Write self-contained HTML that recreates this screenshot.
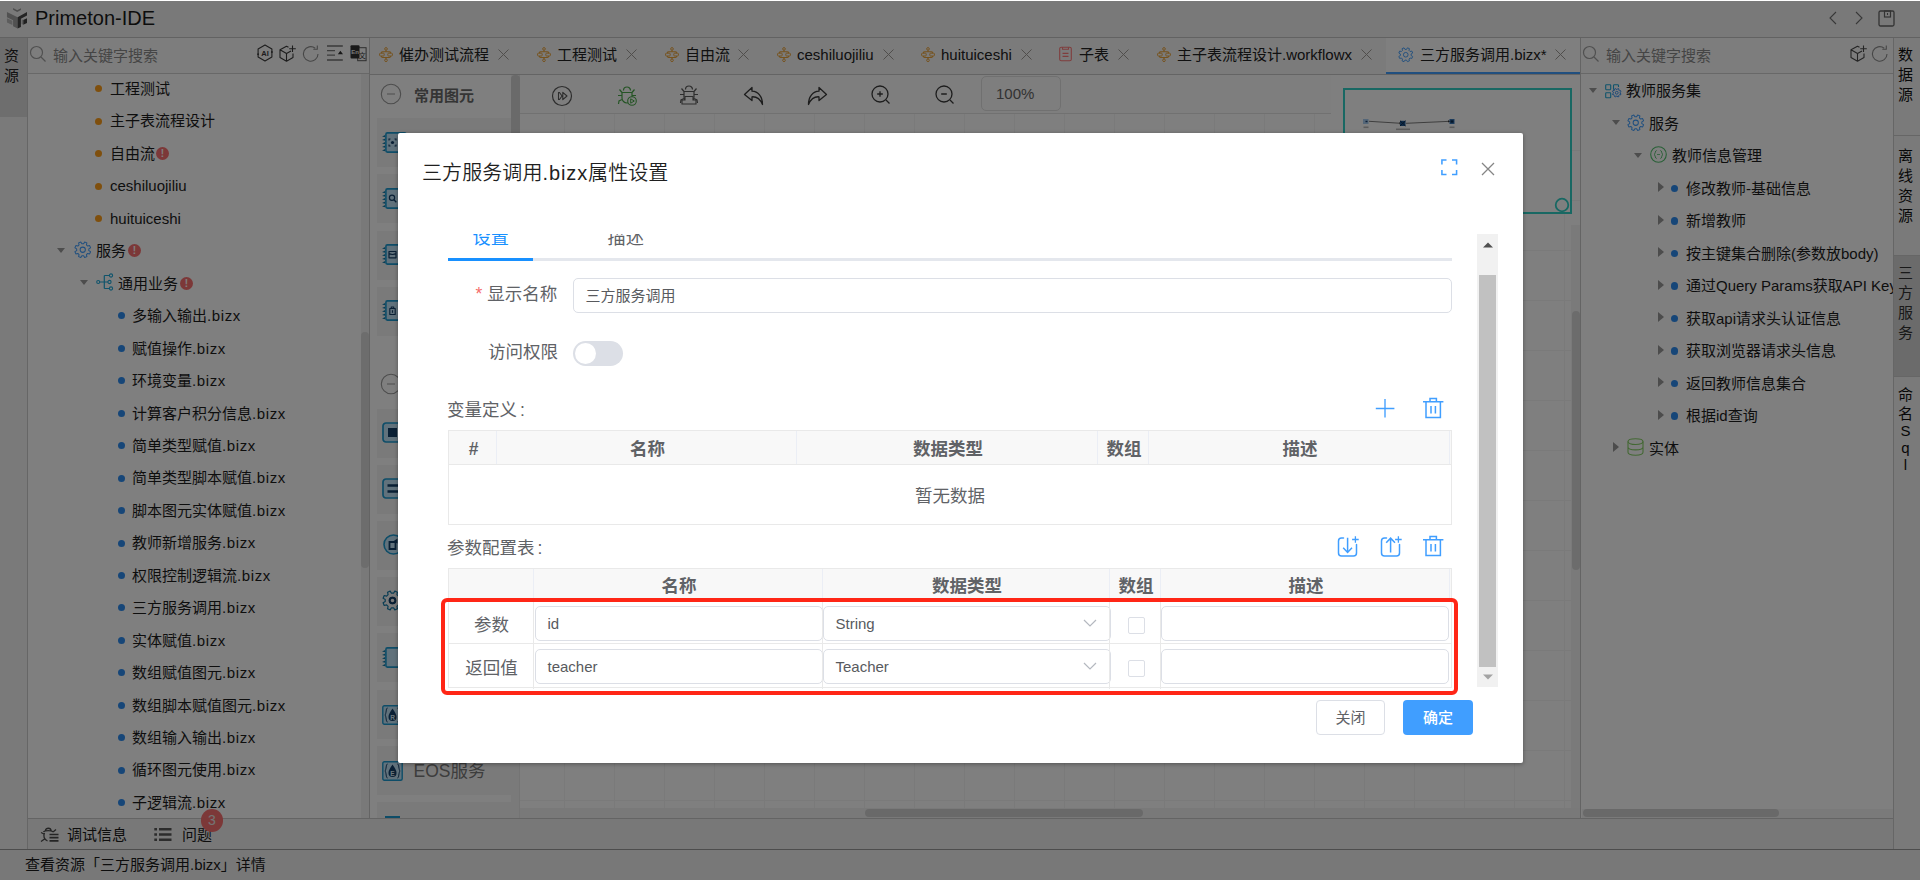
<!DOCTYPE html>
<html lang="zh-CN"><head><meta charset="utf-8"><title>Primeton-IDE</title>
<style>
*{box-sizing:border-box;margin:0;padding:0}
html,body{width:1920px;height:880px;overflow:hidden;background:#fff}
body{font-family:"Liberation Sans","Noto Sans CJK SC",sans-serif;font-size:15px;color:#222;}
#app{position:absolute;left:0;top:0;width:1920px;height:880px;overflow:hidden;background:#fff}
.abs{position:absolute}
.t{position:absolute;white-space:nowrap;line-height:20px;height:20px}
svg{position:absolute;overflow:visible}
.hdr{position:absolute;left:0;top:1px;width:1920px;height:37px;background:#f3f3f3;border-bottom:1px solid #c4c4c4}
.lstrip{position:absolute;left:0;top:38px;width:28px;height:811px;background:#f4f4f4;border-right:1px solid #ccc}
.rstrip{position:absolute;left:1893px;top:38px;width:27px;height:811px;background:#f4f4f4;border-left:1px solid #ccc}
.vt{position:absolute;width:27px;text-align:center;font-size:15px;line-height:17.5px;color:#222}
.lp{position:absolute;left:28px;top:38px;width:342px;height:780px;background:#fff;border-right:1px solid #c8c8c8}
.rp{position:absolute;left:1580px;top:38px;width:313px;height:780px;background:#fff;border-left:1px solid #c8c8c8;overflow:hidden}
.search{position:absolute;left:0;top:0;width:100%;height:36px;border-bottom:1px solid #d0d0d0;background:#fbfbfb}
.ph{color:#8a8a8a;font-size:15px}
.row{position:absolute;left:0;width:100%;height:32.5px;line-height:32.5px;font-size:15px;white-space:nowrap;color:#1c1c1c}
.row span.tx{position:absolute;top:0}
.ls{letter-spacing:.6px}
.dot{position:absolute;width:7px;height:7px;border-radius:50%}
.arr{position:absolute;width:0;height:0}
.arr.d{border-left:4.5px solid transparent;border-right:4.5px solid transparent;border-top:5.5px solid #9a9a9a}
.arr.r{border-top:5px solid transparent;border-bottom:5px solid transparent;border-left:6px solid #989898}
.err{position:absolute;width:13px;height:13px;border-radius:50%;background:#f97070;color:#fff;font-size:10px;line-height:13px;text-align:center;font-weight:bold}
.tabs{position:absolute;left:370px;top:38px;width:1210px;height:37px;background:#f7f7f7;border-bottom:1px solid #c8c8c8}
.tab{position:absolute;top:0;height:35px;line-height:33px;font-size:15px;color:#222;white-space:nowrap}
.mask{position:absolute;left:0;top:1px;width:1920px;height:879px;background:rgba(0,0,0,.5)}
.dlg{position:absolute;left:398px;top:133px;width:1125px;height:630px;background:#fff;border-radius:2px;box-shadow:0 1px 4px rgba(0,0,0,.35)}
.lbl{position:absolute;font-size:17.5px;color:#606266;white-space:nowrap;line-height:24px}
.inp{position:absolute;border:1px solid #dcdfe6;border-radius:5px;background:#fff;font-size:15px;color:#585a5e;line-height:34px;padding-left:11.5px;white-space:nowrap}
.th{position:absolute;top:0;height:100%;border-right:1px solid #ebeef5;font-weight:bold;font-size:17.5px;color:#606266;text-align:center;padding-left:2px}
</style></head>
<body><div id="app">
<div class="hdr"><svg style="left:0;top:-1px" width="34" height="34" viewBox="0 0 34 34"><path d="M13.100 7.900 L17.200 10.300 L20.900 8.300 V10.100 L17.200 12.100 L13.100 9.800Z" fill="#9a9a9a"/><path d="M6.950 12 L17.600 17.200 V28.600 L13.100 26.300 V20.200 L6.950 17.300Z" fill="#a2a2a2"/><path d="M6.950 18.300 L12.400 20.700 V24.900 L6.950 22.500Z" fill="#bababa"/><path d="M17.600 17.200 L27 12 V15.600 L20.900 18.700 V26.900 L17.600 28.600Z" fill="#484848"/><path d="M23.200 19.900 L27 18.200 V22.900 L23.200 24.800Z" fill="#404040"/><path d="M21.600 19.300 L23.200 19.900 V24.800 L21.600 24.100Z" fill="#b0b0b0"/></svg><div class="t" style="left:35px;top:6px;font-size:20px;line-height:22px;height:22px;color:#1a1a1a">Primeton-IDE</div><svg style="left:1827px;top:10px" width="12" height="14" viewBox="0 0 12 14"><path d="M9 1 L3 7 L9 13" fill="none" stroke="#707070" stroke-width="1.1"/></svg><svg style="left:1853px;top:10px" width="12" height="14" viewBox="0 0 12 14"><path d="M3 1 L9 7 L3 13" fill="none" stroke="#707070" stroke-width="1.1"/></svg><svg style="left:1878px;top:9px" width="17" height="17" viewBox="0 0 17 17"><rect x="1" y="1" width="15" height="15" rx="1.5" fill="none" stroke="#666" stroke-width="1.3"/><rect x="6.5" y="1" width="6" height="6" fill="none" stroke="#666" stroke-width="1.2"/><path d="M9.5 3 V5" stroke="#666" stroke-width="1.1"/></svg></div>
<div class="lstrip"><div class="abs" style="left:0;top:0;width:27px;height:79px;background:#dcdcdc"></div><div class="vt" style="left:-2px;top:8px;line-height:20px">资<br>源</div></div>
<div class="rstrip"><div class="abs" style="left:0;top:97px;width:26px;height:1px;background:#ccc"></div><div class="abs" style="left:0;top:217px;width:26px;height:1px;background:#ccc"></div><div class="abs" style="left:0;top:218px;width:26px;height:120px;background:#d6d6d6"></div><div class="abs" style="left:0;top:338px;width:26px;height:1px;background:#ccc"></div><div class="vt" style="left:-2px;top:7px;line-height:20px;height:20px;color:#111">数</div><div class="vt" style="left:-2px;top:27px;line-height:20px;height:20px;color:#111">据</div><div class="vt" style="left:-2px;top:47px;line-height:20px;height:20px;color:#111">源</div><div class="vt" style="left:-2px;top:107.5px;line-height:20px;height:20px;color:#111">离</div><div class="vt" style="left:-2px;top:127.5px;line-height:20px;height:20px;color:#111">线</div><div class="vt" style="left:-2px;top:147.5px;line-height:20px;height:20px;color:#111">资</div><div class="vt" style="left:-2px;top:167.5px;line-height:20px;height:20px;color:#111">源</div><div class="vt" style="left:-2px;top:225px;line-height:20px;height:20px;color:#333">三</div><div class="vt" style="left:-2px;top:245px;line-height:20px;height:20px;color:#333">方</div><div class="vt" style="left:-2px;top:265px;line-height:20px;height:20px;color:#333">服</div><div class="vt" style="left:-2px;top:285px;line-height:20px;height:20px;color:#333">务</div><div class="vt" style="left:-2px;top:347px;line-height:20px;height:20px;color:#111">命</div><div class="vt" style="left:-2px;top:366px;line-height:20px;height:20px;color:#111">名</div><div class="vt" style="left:-2px;top:383px;line-height:20px;height:20px;color:#111">S</div><div class="vt" style="left:-2px;top:400px;line-height:20px;height:20px;color:#111">q</div><div class="vt" style="left:-2px;top:417px;line-height:20px;height:20px;color:#111">l</div></div>
<div class="lp"><div class="search"><svg style="left:1px;top:7px" width="18" height="18" viewBox="0 0 18 18"><circle cx="7.5" cy="7.5" r="6" fill="none" stroke="#a0a0a0" stroke-width="1.2"/><path d="M12 12 L16.5 16.5" stroke="#a0a0a0" stroke-width="1.2"/></svg><div class="t ph" style="left:25px;top:8px">输入关键字搜索</div><svg style="left:227.9px;top:6px" width="18" height="18" viewBox="0 0 18 18"><path d="M9 1 L15.900 5 V13 L9 17 L2.100 13 V5Z" fill="none" stroke="#3a3a3a" stroke-width="1.100" stroke-linejoin="round"/><circle cx="2.100" cy="10.200" r="0.900" fill="#3a3a3a"/><circle cx="15.900" cy="8" r="0.900" fill="#3a3a3a"/><text x="9" y="11.700" font-size="7.500" font-weight="bold" text-anchor="middle" fill="#3a3a3a" font-family="Liberation Sans,sans-serif">AI</text></svg><svg style="left:251px;top:7px" width="18" height="18" viewBox="0 0 18 18"><path d="M9.500 2.300 L7.500 1.300 L1 4.800 V12.600 L7.500 16.300 L14 12.600 V8.500 M1 4.800 L7.500 8.500 L12 6 M7.500 8.500 V16.300" fill="none" stroke="#3a3a3a" stroke-width="1.100" stroke-linejoin="round"/><path d="M13.500 0.500 V7 M10.200 3.700 H16.800" stroke="#3a3a3a" stroke-width="1.100"/></svg><svg style="left:273.9px;top:7px" width="18" height="18" viewBox="0 0 18 18"><path d="M16 9 A7.300 7.300 0 1 1 13.200 3.200" fill="none" stroke="#8c8c8c" stroke-width="1.100"/><path d="M11.300 4.300 H15.300 V0.500" fill="none" stroke="#8c8c8c" stroke-width="1.100"/></svg><svg style="left:298.2px;top:6.5px" width="18" height="16" viewBox="0 0 18 16"><path d="M1 1 H16.800 M1 15 H16.800" stroke="#2e2e2e" stroke-width="1" fill="none"/><path d="M1 5.700 H9 M1 10.100 H9" stroke="#7a7a7a" stroke-width="1.200" fill="none"/><path d="M11.800 9.300 L14.400 5.700 L17 9.300Z" fill="#2e2e2e"/></svg><svg style="left:321.5px;top:7px" width="17" height="17" viewBox="0 0 17 17"><rect x="7.700" y="2.700" width="8.400" height="13" fill="#fbfbfb" stroke="#5a5a5a" stroke-width="1"/><text x="12.300" y="12.600" font-size="7" text-anchor="middle" fill="#3a3a3a" font-family="Liberation Sans,Noto Sans CJK SC,sans-serif">文</text><rect x="0.500" y="0.300" width="9" height="13.200" rx="1" fill="#333"/><text x="5" y="9.300" font-size="6" font-weight="bold" text-anchor="middle" fill="#eee" font-family="Liberation Sans,sans-serif">En</text></svg></div><div class="row" style="top:35.00px"><span class="dot" style="left:67px;top:12.3px;background:#ff9f1a"></span><span class="tx" style="left:82px">工程测试</span></div><div class="row" style="top:67.45px"><span class="dot" style="left:67px;top:12.3px;background:#ff9f1a"></span><span class="tx" style="left:82px">主子表流程设计</span></div><div class="row" style="top:99.90px"><span class="dot" style="left:67px;top:12.3px;background:#ff9f1a"></span><span class="tx" style="left:82px">自由流</span><span class="err" style="left:128px;top:9px">!</span></div><div class="row" style="top:132.35px"><span class="dot" style="left:67px;top:12.3px;background:#ff9f1a"></span><span class="tx" style="left:82px">ceshiluojiliu</span></div><div class="row" style="top:164.80px"><span class="dot" style="left:67px;top:12.3px;background:#ff9f1a"></span><span class="tx" style="left:82px">huituiceshi</span></div><div class="row" style="top:197.25px"><span class="arr d" style="left:28.5px;top:12.5px"></span><svg style="left:46px;top:5.6px" width="17.5" height="17.5" viewBox="0 0 20 20"><path d="M16.93 11.00 L18.93 12.21 L17.88 14.75 L15.60 14.20 L14.20 15.60 L14.75 17.88 L12.21 18.93 L11.00 16.93 L9.00 16.93 L7.79 18.93 L5.25 17.88 L5.80 15.60 L4.40 14.20 L2.12 14.75 L1.07 12.21 L3.07 11.00 L3.07 9.00 L1.07 7.79 L2.12 5.25 L4.40 5.80 L5.80 4.40 L5.25 2.12 L7.79 1.07 L9.00 3.07 L11.00 3.07 L12.21 1.07 L14.75 2.12 L14.20 4.40 L15.60 5.80 L17.88 5.25 L18.93 7.79 L16.93 9.00Z" fill="none" stroke="#409eff" stroke-width="1.15" stroke-linejoin="round"/><circle cx="10" cy="10" r="3" fill="none" stroke="#409eff" stroke-width="1.15"/></svg><span class="tx" style="left:68px">服务</span><span class="err" style="left:100px;top:9px">!</span></div><div class="row" style="top:229.70px"><span class="arr d" style="left:51.5px;top:12.5px"></span><svg style="left:68px;top:5px" width="18" height="18" viewBox="0 0 18 18"><path d="M3.600 9 H12 M8.300 2.500 V15.500 M8.300 2.500 Q8.300 2.500 9 2.500 H13.500 M8.300 15.500 H13.500" fill="none" stroke="#1fa8d8" stroke-width="1.2"/><circle cx="2.200" cy="9" r="1.500" fill="none" stroke="#1fa8d8" stroke-width="1.1"/><circle cx="15" cy="2.500" r="1.600" fill="none" stroke="#1fa8d8" stroke-width="1.1"/><circle cx="13.500" cy="9" r="1.600" fill="none" stroke="#1fa8d8" stroke-width="1.1"/><circle cx="15" cy="15.500" r="1.600" fill="none" stroke="#1fa8d8" stroke-width="1.1"/></svg><span class="tx" style="left:90px">通用业务</span><span class="err" style="left:152px;top:9px">!</span></div><div class="row" style="top:262.15px"><span class="dot" style="left:90px;top:12.3px;background:#2d8cf0"></span><span class="tx" style="left:104px">多输入输出<span class="ls">.bizx</span></span></div><div class="row" style="top:294.60px"><span class="dot" style="left:90px;top:12.3px;background:#2d8cf0"></span><span class="tx" style="left:104px">赋值操作<span class="ls">.bizx</span></span></div><div class="row" style="top:327.05px"><span class="dot" style="left:90px;top:12.3px;background:#2d8cf0"></span><span class="tx" style="left:104px">环境变量<span class="ls">.bizx</span></span></div><div class="row" style="top:359.50px"><span class="dot" style="left:90px;top:12.3px;background:#2d8cf0"></span><span class="tx" style="left:104px">计算客户积分信息<span class="ls">.bizx</span></span></div><div class="row" style="top:391.95px"><span class="dot" style="left:90px;top:12.3px;background:#2d8cf0"></span><span class="tx" style="left:104px">简单类型赋值<span class="ls">.bizx</span></span></div><div class="row" style="top:424.40px"><span class="dot" style="left:90px;top:12.3px;background:#2d8cf0"></span><span class="tx" style="left:104px">简单类型脚本赋值<span class="ls">.bizx</span></span></div><div class="row" style="top:456.85px"><span class="dot" style="left:90px;top:12.3px;background:#2d8cf0"></span><span class="tx" style="left:104px">脚本图元实体赋值<span class="ls">.bizx</span></span></div><div class="row" style="top:489.30px"><span class="dot" style="left:90px;top:12.3px;background:#2d8cf0"></span><span class="tx" style="left:104px">教师新增服务<span class="ls">.bizx</span></span></div><div class="row" style="top:521.75px"><span class="dot" style="left:90px;top:12.3px;background:#2d8cf0"></span><span class="tx" style="left:104px">权限控制逻辑流<span class="ls">.bizx</span></span></div><div class="row" style="top:554.20px"><span class="dot" style="left:90px;top:12.3px;background:#2d8cf0"></span><span class="tx" style="left:104px">三方服务调用<span class="ls">.bizx</span></span></div><div class="row" style="top:586.65px"><span class="dot" style="left:90px;top:12.3px;background:#2d8cf0"></span><span class="tx" style="left:104px">实体赋值<span class="ls">.bizx</span></span></div><div class="row" style="top:619.10px"><span class="dot" style="left:90px;top:12.3px;background:#2d8cf0"></span><span class="tx" style="left:104px">数组赋值图元<span class="ls">.bizx</span></span></div><div class="row" style="top:651.55px"><span class="dot" style="left:90px;top:12.3px;background:#2d8cf0"></span><span class="tx" style="left:104px">数组脚本赋值图元<span class="ls">.bizx</span></span></div><div class="row" style="top:684.00px"><span class="dot" style="left:90px;top:12.3px;background:#2d8cf0"></span><span class="tx" style="left:104px">数组输入输出<span class="ls">.bizx</span></span></div><div class="row" style="top:716.45px"><span class="dot" style="left:90px;top:12.3px;background:#2d8cf0"></span><span class="tx" style="left:104px">循环图元使用<span class="ls">.bizx</span></span></div><div class="row" style="top:748.90px"><span class="dot" style="left:90px;top:12.3px;background:#2d8cf0"></span><span class="tx" style="left:104px">子逻辑流<span class="ls">.bizx</span></span></div><div class="abs" style="left:333px;top:36px;width:8px;height:744px;background:#f2f2f2"></div><div class="abs" style="left:333px;top:293.5px;width:7.5px;height:236px;background:#dadada;border-radius:4px"></div></div>
<div class="abs" style="left:28px;top:818px;width:1865px;height:31px;background:#f1f1f1;border-top:1px solid #c8c8c8"></div><svg style="left:40px;top:826px" width="20" height="17" viewBox="0 0 20 17"><path d="M5.500 4.500 C5.500 1.500 11 1.500 11 4.500 M3.500 6 C4.500 4.200 12 4.200 13 6 M4.500 7 C3 10 4 13.500 7.500 15 M1 6.500 L4 8 M1 15.500 L4.500 13 M16 3.500 L13 6" fill="none" stroke="#4a4a4a" stroke-width="1.300"/><path d="M9.500 8.500 H18.500 M9.500 11.700 H18.500 M9.500 14.900 H18.500" stroke="#4a4a4a" stroke-width="1.700"/></svg><div class="t" style="left:67px;top:825px;font-size:15px;color:#1a1a1a">调试信息</div><svg style="left:153.500px;top:827.500px" width="18" height="13" viewBox="0 0 18 13"><path d="M5 1.200 H17.500 M5 6.500 H17.500 M5 11.800 H17.500" stroke="#585858" stroke-width="2.400"/><path d="M0.300 1.200 H3 M0.300 6.500 H3 M0.300 11.800 H3" stroke="#585858" stroke-width="2.400"/></svg><div class="t" style="left:182px;top:825px;font-size:15px;color:#1a1a1a">问题</div><div class="abs" style="left:200.500px;top:809px;width:22.600px;height:22.600px;border-radius:50%;background:#f97070;color:#e8e8e8;font-size:14px;line-height:22px;text-align:center">3</div><div class="abs" style="left:0;top:849px;width:1920px;height:31px;background:#f1f1f1;border-top:1px solid #9a9a9a"></div><div class="t" style="left:25px;top:855px;font-size:15px;color:#1a1a1a">查看资源「三方服务调用.bizx」详情</div>
<div class="tabs"><div class="abs" style="left:1016px;top:0;width:194px;height:36px;background:#fff;border-bottom:2px solid #409eff"></div><svg style="left:8.7px;top:8.8px" width="14" height="15.200" viewBox="0 0 14 16" preserveAspectRatio="none"><rect x="2.500" y="5" width="9" height="6" rx="1" fill="none" stroke="#eba53c" stroke-width="1.1"/><rect x="0.600" y="6.500" width="4.600" height="3" rx="0.800" fill="#f8f8f8" stroke="#eba53c" stroke-width="1"/><rect x="8.800" y="6.500" width="4.600" height="3" rx="0.800" fill="#f8f8f8" stroke="#eba53c" stroke-width="1"/><path d="M7 3.300 V5 M7 11 V12.700" stroke="#eba53c" stroke-width="1.100"/><circle cx="7" cy="2" r="1.350" fill="none" stroke="#eba53c" stroke-width="1"/><circle cx="7" cy="14" r="1.350" fill="none" stroke="#eba53c" stroke-width="1"/></svg><div class="tab" style="left:29px">催办测试流程</div><svg style="left:128px;top:10.5px" width="11" height="11" viewBox="0 0 11 11"><path d="M0.5 0.5 L10.5 10.5 M10.5 0.5 L0.5 10.5" stroke="#a09c98" stroke-width="1"/></svg><svg style="left:166.7px;top:8.8px" width="14" height="15.200" viewBox="0 0 14 16" preserveAspectRatio="none"><rect x="2.500" y="5" width="9" height="6" rx="1" fill="none" stroke="#eba53c" stroke-width="1.1"/><rect x="0.600" y="6.500" width="4.600" height="3" rx="0.800" fill="#f8f8f8" stroke="#eba53c" stroke-width="1"/><rect x="8.800" y="6.500" width="4.600" height="3" rx="0.800" fill="#f8f8f8" stroke="#eba53c" stroke-width="1"/><path d="M7 3.300 V5 M7 11 V12.700" stroke="#eba53c" stroke-width="1.100"/><circle cx="7" cy="2" r="1.350" fill="none" stroke="#eba53c" stroke-width="1"/><circle cx="7" cy="14" r="1.350" fill="none" stroke="#eba53c" stroke-width="1"/></svg><div class="tab" style="left:187px">工程测试</div><svg style="left:256px;top:10.5px" width="11" height="11" viewBox="0 0 11 11"><path d="M0.5 0.5 L10.5 10.5 M10.5 0.5 L0.5 10.5" stroke="#a09c98" stroke-width="1"/></svg><svg style="left:294.7px;top:8.8px" width="14" height="15.200" viewBox="0 0 14 16" preserveAspectRatio="none"><rect x="2.500" y="5" width="9" height="6" rx="1" fill="none" stroke="#eba53c" stroke-width="1.1"/><rect x="0.600" y="6.500" width="4.600" height="3" rx="0.800" fill="#f8f8f8" stroke="#eba53c" stroke-width="1"/><rect x="8.800" y="6.500" width="4.600" height="3" rx="0.800" fill="#f8f8f8" stroke="#eba53c" stroke-width="1"/><path d="M7 3.300 V5 M7 11 V12.700" stroke="#eba53c" stroke-width="1.100"/><circle cx="7" cy="2" r="1.350" fill="none" stroke="#eba53c" stroke-width="1"/><circle cx="7" cy="14" r="1.350" fill="none" stroke="#eba53c" stroke-width="1"/></svg><div class="tab" style="left:315px">自由流</div><svg style="left:368px;top:10.5px" width="11" height="11" viewBox="0 0 11 11"><path d="M0.5 0.5 L10.5 10.5 M10.5 0.5 L0.5 10.5" stroke="#a09c98" stroke-width="1"/></svg><svg style="left:406.7px;top:8.8px" width="14" height="15.200" viewBox="0 0 14 16" preserveAspectRatio="none"><rect x="2.500" y="5" width="9" height="6" rx="1" fill="none" stroke="#eba53c" stroke-width="1.1"/><rect x="0.600" y="6.500" width="4.600" height="3" rx="0.800" fill="#f8f8f8" stroke="#eba53c" stroke-width="1"/><rect x="8.800" y="6.500" width="4.600" height="3" rx="0.800" fill="#f8f8f8" stroke="#eba53c" stroke-width="1"/><path d="M7 3.300 V5 M7 11 V12.700" stroke="#eba53c" stroke-width="1.100"/><circle cx="7" cy="2" r="1.350" fill="none" stroke="#eba53c" stroke-width="1"/><circle cx="7" cy="14" r="1.350" fill="none" stroke="#eba53c" stroke-width="1"/></svg><div class="tab" style="left:427px">ceshiluojiliu</div><svg style="left:513px;top:10.5px" width="11" height="11" viewBox="0 0 11 11"><path d="M0.5 0.5 L10.5 10.5 M10.5 0.5 L0.5 10.5" stroke="#a09c98" stroke-width="1"/></svg><svg style="left:550.7px;top:8.8px" width="14" height="15.200" viewBox="0 0 14 16" preserveAspectRatio="none"><rect x="2.500" y="5" width="9" height="6" rx="1" fill="none" stroke="#eba53c" stroke-width="1.1"/><rect x="0.600" y="6.500" width="4.600" height="3" rx="0.800" fill="#f8f8f8" stroke="#eba53c" stroke-width="1"/><rect x="8.800" y="6.500" width="4.600" height="3" rx="0.800" fill="#f8f8f8" stroke="#eba53c" stroke-width="1"/><path d="M7 3.300 V5 M7 11 V12.700" stroke="#eba53c" stroke-width="1.100"/><circle cx="7" cy="2" r="1.350" fill="none" stroke="#eba53c" stroke-width="1"/><circle cx="7" cy="14" r="1.350" fill="none" stroke="#eba53c" stroke-width="1"/></svg><div class="tab" style="left:571px">huituiceshi</div><svg style="left:651px;top:10.5px" width="11" height="11" viewBox="0 0 11 11"><path d="M0.5 0.5 L10.5 10.5 M10.5 0.5 L0.5 10.5" stroke="#a09c98" stroke-width="1"/></svg><svg style="left:689px;top:8px" width="13" height="15.500" viewBox="0 0 13 16" preserveAspectRatio="none"><rect x="0.700" y="1.200" width="11.600" height="14" rx="1.600" fill="none" stroke="#ff7a7a" stroke-width="1.100"/><path d="M3.500 1.200 V3.300 H9.500 V1.200" fill="none" stroke="#ff7a7a" stroke-width="1.100"/><path d="M3.500 7.500 H9.500 M3.500 10.800 H9.500" stroke="#ff7a7a" stroke-width="1.300"/></svg><div class="tab" style="left:709px">子表</div><svg style="left:748px;top:10.5px" width="11" height="11" viewBox="0 0 11 11"><path d="M0.5 0.5 L10.5 10.5 M10.5 0.5 L0.5 10.5" stroke="#a09c98" stroke-width="1"/></svg><svg style="left:786.7px;top:8.8px" width="14" height="15.200" viewBox="0 0 14 16" preserveAspectRatio="none"><rect x="2.500" y="5" width="9" height="6" rx="1" fill="none" stroke="#eba53c" stroke-width="1.1"/><rect x="0.600" y="6.500" width="4.600" height="3" rx="0.800" fill="#f8f8f8" stroke="#eba53c" stroke-width="1"/><rect x="8.800" y="6.500" width="4.600" height="3" rx="0.800" fill="#f8f8f8" stroke="#eba53c" stroke-width="1"/><path d="M7 3.300 V5 M7 11 V12.700" stroke="#eba53c" stroke-width="1.100"/><circle cx="7" cy="2" r="1.350" fill="none" stroke="#eba53c" stroke-width="1"/><circle cx="7" cy="14" r="1.350" fill="none" stroke="#eba53c" stroke-width="1"/></svg><div class="tab" style="left:807px">主子表流程设计.workflowx</div><svg style="left:991px;top:10.5px" width="11" height="11" viewBox="0 0 11 11"><path d="M0.5 0.5 L10.5 10.5 M10.5 0.5 L0.5 10.5" stroke="#a09c98" stroke-width="1"/></svg><svg style="left:1027.5px;top:8.5px" width="15.5" height="15.5" viewBox="0 0 20 20"><path d="M16.93 11.00 L18.93 12.21 L17.88 14.75 L15.60 14.20 L14.20 15.60 L14.75 17.88 L12.21 18.93 L11.00 16.93 L9.00 16.93 L7.79 18.93 L5.25 17.88 L5.80 15.60 L4.40 14.20 L2.12 14.75 L1.07 12.21 L3.07 11.00 L3.07 9.00 L1.07 7.79 L2.12 5.25 L4.40 5.80 L5.80 4.40 L5.25 2.12 L7.79 1.07 L9.00 3.07 L11.00 3.07 L12.21 1.07 L14.75 2.12 L14.20 4.40 L15.60 5.80 L17.88 5.25 L18.93 7.79 L16.93 9.00Z" fill="none" stroke="#409eff" stroke-width="1.2" stroke-linejoin="round"/><circle cx="10" cy="10" r="3" fill="none" stroke="#409eff" stroke-width="1.2"/></svg><div class="tab" style="left:1050px">三方服务调用.bizx*</div><svg style="left:1185px;top:10.5px" width="11" height="11" viewBox="0 0 11 11"><path d="M0.5 0.5 L10.5 10.5 M10.5 0.5 L0.5 10.5" stroke="#a09c98" stroke-width="1"/></svg></div>
<div class="abs" style="left:370px;top:75px;width:1210px;height:743px;background:#fff;overflow:hidden"><svg style="left:10px;top:7.75px" width="22" height="22" viewBox="0 0 22 22"><circle cx="11" cy="11" r="9.7" fill="none" stroke="#9a9a9a" stroke-width="1.1"/><path d="M7 11 H15" stroke="#b0b0b0" stroke-width="1.3"/></svg><div class="t" style="left:44px;top:10.5px;font-weight:bold;font-size:15px;color:#6a6a6a">常用图元</div><svg style="left:10.3px;top:297.7px" width="22" height="22" viewBox="0 0 22 22"><circle cx="11" cy="11" r="9.7" fill="none" stroke="#9a9a9a" stroke-width="1.1"/><path d="M7 11 H15" stroke="#b0b0b0" stroke-width="1.3"/></svg><div class="abs" style="left:6.5px;top:43px;width:134.5px;height:49px;background:#f4f4f4"></div><svg style="left:11.5px;top:56.5px" width="25" height="21" viewBox="0 0 25 21"><path d="M0 4.6 L3.2 3.0 L3.2 5.2 Z" fill="#147aa8"/><path d="M0 8.1 L3.2 6.5 L3.2 8.7 Z" fill="#147aa8"/><path d="M0 11.6 L3.2 10.0 L3.2 12.2 Z" fill="#147aa8"/><path d="M0 15.1 L3.2 13.5 L3.2 15.7 Z" fill="#147aa8"/><path d="M0 18.6 L3.2 17.0 L3.2 19.2 Z" fill="#147aa8"/><rect x="3.9" y="0.9" width="20" height="19.2" rx="1.5" fill="#c2e4f8" stroke="#1c9ad0" stroke-width="1.6"/><circle cx="10.500" cy="10.500" r="1.600" fill="#14406a"/><path d="M7 8.500 V7 H8.500 M12.500 7 H14 V8.500 M14 12.500 V14 H12.500 M8.500 14 H7 V12.500" fill="none" stroke="#14406a" stroke-width="1.100"/></svg><div class="abs" style="left:6.5px;top:99px;width:134.5px;height:49px;background:#f4f4f4"></div><svg style="left:11.5px;top:112.5px" width="25" height="21" viewBox="0 0 25 21"><path d="M0 4.6 L3.2 3.0 L3.2 5.2 Z" fill="#147aa8"/><path d="M0 8.1 L3.2 6.5 L3.2 8.7 Z" fill="#147aa8"/><path d="M0 11.6 L3.2 10.0 L3.2 12.2 Z" fill="#147aa8"/><path d="M0 15.1 L3.2 13.5 L3.2 15.7 Z" fill="#147aa8"/><path d="M0 18.6 L3.2 17.0 L3.2 19.2 Z" fill="#147aa8"/><rect x="3.9" y="0.9" width="20" height="19.2" rx="1.5" fill="#c2e4f8" stroke="#1c9ad0" stroke-width="1.6"/><circle cx="10" cy="9.800" r="2.600" fill="none" stroke="#14406a" stroke-width="1.200"/><path d="M12 11.800 L14.300 14.200" stroke="#14406a" stroke-width="1.300"/></svg><div class="abs" style="left:6.5px;top:155.5px;width:134.5px;height:49px;background:#f4f4f4"></div><svg style="left:11.5px;top:169px" width="25" height="21" viewBox="0 0 25 21"><path d="M0 4.6 L3.2 3.0 L3.2 5.2 Z" fill="#147aa8"/><path d="M0 8.1 L3.2 6.5 L3.2 8.7 Z" fill="#147aa8"/><path d="M0 11.6 L3.2 10.0 L3.2 12.2 Z" fill="#147aa8"/><path d="M0 15.1 L3.2 13.5 L3.2 15.7 Z" fill="#147aa8"/><path d="M0 18.6 L3.2 17.0 L3.2 19.2 Z" fill="#147aa8"/><rect x="3.9" y="0.9" width="20" height="19.2" rx="1.5" fill="#c2e4f8" stroke="#1c9ad0" stroke-width="1.6"/><path d="M7 7.500 H14 V13.800 H7Z M7 9.500 C8.500 10.800 12.500 10.800 14 9.500" fill="none" stroke="#14406a" stroke-width="1.200" stroke-linejoin="round"/></svg><div class="abs" style="left:6.5px;top:211.8px;width:134.5px;height:49px;background:#f4f4f4"></div><svg style="left:11.5px;top:225.3px" width="25" height="21" viewBox="0 0 25 21"><path d="M0 4.6 L3.2 3.0 L3.2 5.2 Z" fill="#147aa8"/><path d="M0 8.1 L3.2 6.5 L3.2 8.7 Z" fill="#147aa8"/><path d="M0 11.6 L3.2 10.0 L3.2 12.2 Z" fill="#147aa8"/><path d="M0 15.1 L3.2 13.5 L3.2 15.7 Z" fill="#147aa8"/><path d="M0 18.6 L3.2 17.0 L3.2 19.2 Z" fill="#147aa8"/><rect x="3.9" y="0.9" width="20" height="19.2" rx="1.5" fill="#c2e4f8" stroke="#1c9ad0" stroke-width="1.6"/><path d="M7.800 8.500 H13.200 V14.500 H7.800Z M9.300 8.500 V7 H11.700 V8.500 M10.500 10.300 V12.700" fill="none" stroke="#14406a" stroke-width="1.100" stroke-linejoin="round"/></svg><div class="abs" style="left:6.5px;top:333.8px;width:134.5px;height:49px;background:#f4f4f4"></div><svg style="left:12px;top:346.8px" width="22" height="21" viewBox="0 0 22 21"><rect x="1" y="1" width="20" height="19" rx="3" fill="#c2e4f8" stroke="#1c9ad0" stroke-width="1.7"/><rect x="6" y="6" width="9" height="9" fill="#14406a"/></svg><div class="abs" style="left:6.5px;top:389.8px;width:134.5px;height:49px;background:#f4f4f4"></div><svg style="left:12px;top:402.8px" width="22" height="21" viewBox="0 0 22 21"><rect x="1" y="1" width="20" height="19" rx="3" fill="#c2e4f8" stroke="#1c9ad0" stroke-width="1.7"/><path d="M5.500 7.500 H17 M5.500 13.500 H17" stroke="#14406a" stroke-width="2.4"/></svg><div class="abs" style="left:6.5px;top:446.1px;width:134.5px;height:49px;background:#f4f4f4"></div><svg style="left:12.5px;top:459.1px" width="21" height="21" viewBox="0 0 21 21"><circle cx="10.5" cy="10.5" r="9.500" fill="#c2e4f8" stroke="#1c9ad0" stroke-width="1.6"/><path d="M6.500 8 H12.500 V15 H6.500Z" fill="none" stroke="#14406a" stroke-width="1.8"/><path d="M10 7.500 L14.500 4.500 V9.500Z" fill="#14406a"/></svg><div class="abs" style="left:6.5px;top:502px;width:134.5px;height:49px;background:#f4f4f4"></div><svg style="left:11.5px;top:515px" width="21" height="21" viewBox="0 0 20 20"><path d="M16.93 11.00 L18.93 12.21 L17.88 14.75 L15.60 14.20 L14.20 15.60 L14.75 17.88 L12.21 18.93 L11.00 16.93 L9.00 16.93 L7.79 18.93 L5.25 17.88 L5.80 15.60 L4.40 14.20 L2.12 14.75 L1.07 12.21 L3.07 11.00 L3.07 9.00 L1.07 7.79 L2.12 5.25 L4.40 5.80 L5.80 4.40 L5.25 2.12 L7.79 1.07 L9.00 3.07 L11.00 3.07 L12.21 1.07 L14.75 2.12 L14.20 4.40 L15.60 5.80 L17.88 5.25 L18.93 7.79 L16.93 9.00Z" fill="none" stroke="#147aa8" stroke-width="1.15" stroke-linejoin="round"/><circle cx="10" cy="10" r="3" fill="none" stroke="#147aa8" stroke-width="1.15"/></svg><svg style="left:17.5px;top:521px" width="9" height="9" viewBox="0 0 9 9"><circle cx="4.5" cy="4.5" r="2.8" fill="none" stroke="#14406a" stroke-width="2"/></svg><div class="abs" style="left:6.5px;top:558.2px;width:134.5px;height:49px;background:#f4f4f4"></div><svg style="left:11.5px;top:571.7px" width="25" height="21" viewBox="0 0 25 21"><path d="M0 4.6 L3.2 3.0 L3.2 5.2 Z" fill="#147aa8"/><path d="M0 8.1 L3.2 6.5 L3.2 8.7 Z" fill="#147aa8"/><path d="M0 11.6 L3.2 10.0 L3.2 12.2 Z" fill="#147aa8"/><path d="M0 15.1 L3.2 13.5 L3.2 15.7 Z" fill="#147aa8"/><path d="M0 18.6 L3.2 17.0 L3.2 19.2 Z" fill="#147aa8"/><rect x="3.9" y="0.9" width="20" height="19.2" rx="1.5" fill="#c2e4f8" stroke="#1c9ad0" stroke-width="1.6"/></svg><div class="abs" style="left:6.5px;top:614.5px;width:134.5px;height:49px;background:#f4f4f4"></div><svg style="left:11.5px;top:629.5px" width="21" height="20" viewBox="0 0 21 20"><rect x="0.8" y="0.8" width="19.400" height="18.400" rx="1.5" fill="#c2e4f8" stroke="#1c9ad0" stroke-width="1.4"/><path d="M5.500 3 C3.800 3 4.500 8.500 3 10 C4.500 11.500 3.800 17 5.500 17 M15.500 3 C17.200 3 16.500 8.500 18 10 C16.500 11.500 17.200 17 15.500 17" fill="none" stroke="#14406a" stroke-width="1"/><path d="M10.500 3.500 C8 7 6.500 9.500 6.500 12 A4 4 0 0 0 14.500 12 C14.500 9.500 13 7 10.500 3.500Z" fill="#14406a"/><text x="10.500" y="14.800" font-size="6.500" font-weight="bold" text-anchor="middle" fill="#d8ecf8" font-family="Liberation Sans,sans-serif">R</text></svg><div class="abs" style="left:6.5px;top:671px;width:134.5px;height:49px;background:#f4f4f4"></div><svg style="left:11.5px;top:686px" width="21" height="20" viewBox="0 0 21 20"><rect x="0.8" y="0.8" width="19.400" height="18.400" rx="1.5" fill="#c2e4f8" stroke="#1c9ad0" stroke-width="1.4"/><path d="M5.500 3 C3.800 3 4.500 8.500 3 10 C4.500 11.500 3.800 17 5.500 17 M15.500 3 C17.200 3 16.500 8.500 18 10 C16.500 11.500 17.200 17 15.500 17" fill="none" stroke="#14406a" stroke-width="1"/><path d="M10.500 3.500 C8 7 6.500 9.500 6.500 12 A4 4 0 0 0 14.500 12 C14.500 9.500 13 7 10.500 3.500Z" fill="#14406a"/><text x="10.500" y="14.800" font-size="6.500" font-weight="bold" text-anchor="middle" fill="#d8ecf8" font-family="Liberation Sans,sans-serif">E</text></svg><div class="t" style="left:43.5px;top:684.5px;font-size:17.5px;line-height:22px;height:22px;color:#7a7a7a">EOS服务</div><div class="abs" style="left:6.5px;top:727px;width:134.5px;height:49px;background:#f4f4f4"></div><div class="abs" style="left:15px;top:740.5px;width:15px;height:2px;background:#1c9ad0"></div><div class="abs" style="left:141px;top:0;width:9px;height:743px;background:#f4f4f4;border-right:1px solid #e9e9e9"></div><div class="abs" style="left:141px;top:0;width:8.500px;height:496px;background:#d4d4d4;border-radius:4px"></div><div class="abs" style="left:150px;top:39px;width:1060px;height:704px;background-color:#fff;background-image:linear-gradient(#f4f4f4 1px,transparent 1px),linear-gradient(90deg,#f4f4f4 1px,transparent 1px);background-size:50px 50px;background-position:44px 36px"></div><div class="abs" style="left:150px;top:0;width:811px;height:39px;background:#fdfdfd;border-bottom:1px solid #e2e2e2"></div><svg style="left:180px;top:9px" width="24" height="24" viewBox="0 0 24 24"><circle cx="12" cy="12" r="9.5" fill="none" stroke="#5a5a5a" stroke-width="1.2"/><path d="M8.500 8.500 H9.500 L12 12 L9.500 15.500 H8.500Z M12.800 8.300 L17 12 L12.800 15.700Z" fill="none" stroke="#5a5a5a" stroke-width="1.1" stroke-linejoin="round"/></svg><svg style="left:244.5px;top:8.5px" width="24" height="24" viewBox="0 0 24 24"><path d="M8.500 6.500 A3.500 3.500 0 0 1 15.500 6.500 M7 8.500 H17 V14 A5 5 0 0 1 7 14Z M7 11.500 H3 M7 15.500 L4 17 L3.500 20 M17 11.500 H21 M7 8.500 L4.500 5.500 M17 8.500 L19.500 5.500" fill="none" stroke="#4aa84a" stroke-width="1.2"/><circle cx="17" cy="17" r="4.300" fill="#fdfdfd" stroke="#4aa84a" stroke-width="1.1"/><path d="M15.700 14.800 L19.300 17 L15.700 19.200Z" fill="none" stroke="#4aa84a" stroke-width="1" stroke-linejoin="round"/></svg><svg style="left:307px;top:8px" width="24" height="24" viewBox="0 0 24 24"><path d="M8.500 6.500 A3.500 3.500 0 0 1 15.500 6.500 M7 8.500 H17 V14 A5 5 0 0 1 7 14Z M7 11.500 H3 M7 15.500 L4 17 L3.500 20 M17 11.500 H21 M7 8.500 L4.500 5.500 M17 8.500 L19.500 5.500 M17 15.500 L20 17 L20.500 20" fill="none" stroke="#5a5a5a" stroke-width="1.2"/><path d="M8 13.500 H16 V17 H19 V21 H5 V17 H8Z" fill="#fdfdfd" stroke="#5a5a5a" stroke-width="1.1"/></svg><svg style="left:372px;top:8.5px" width="24" height="24" viewBox="0 0 24 24"><path d="M10 3.500 L2.500 10.500 L10 16.500 V12.800 C14.500 12.500 18 14.500 20.500 20.500 C20.500 12.500 16 7.500 10 7.200Z" fill="none" stroke="#3a3a3a" stroke-width="1.3" stroke-linejoin="round"/></svg><svg style="left:435px;top:8.5px" width="24" height="24" viewBox="0 0 24 24"><path d="M14 3.500 L21.500 10.500 L14 16.500 V12.800 C9.500 12.500 6 14.500 3.500 20.500 C3.500 12.500 8 7.500 14 7.200Z" fill="none" stroke="#3a3a3a" stroke-width="1.3" stroke-linejoin="round"/></svg><svg style="left:499px;top:7.5px" width="24" height="24" viewBox="0 0 24 24"><circle cx="11" cy="11" r="8" fill="none" stroke="#3a3a3a" stroke-width="1.3"/><path d="M17 17 L20.500 20.500 M8.200 11 H13.800 M11 8.200 V13.800" stroke="#3a3a3a" stroke-width="1.3"/></svg><svg style="left:562.5px;top:7.5px" width="24" height="24" viewBox="0 0 24 24"><circle cx="11" cy="11" r="8" fill="none" stroke="#3a3a3a" stroke-width="1.3"/><path d="M17 17 L20.500 20.500 M8.200 11 H13.800" stroke="#3a3a3a" stroke-width="1.3"/></svg><div class="abs" style="left:611px;top:1px;width:80px;height:35px;border:1px solid #e0e0e0;border-radius:5px;background:#fcfcfc;font-size:15px;line-height:34px;color:#666;padding-left:14px">100%</div><div class="abs" style="left:973px;top:13px;width:229px;height:126px;border:2px solid #31d0c6;background:#fff"></div><svg style="left:990px;top:40px" width="110" height="20" viewBox="0 0 110 20"><path d="M9 6.300 L41 8.300 M46 8.300 L90 6.300" stroke="#444" stroke-width="0.700" fill="none"/><path d="M39.500 7 L42 8.300 L39.500 9.500Z M88 5.200 L90.500 6.300 L88 7.500Z" fill="#333"/><rect x="3" y="4" width="5.500" height="5" fill="#a8cdf0"/><rect x="5.500" y="5.800" width="2" height="1.400" fill="#1c3f6f"/><rect x="40" y="5.800" width="5.500" height="5.200" fill="#1f5a96"/><path d="M40 5.800 L45.500 11 M45.500 5.800 L40 11" stroke="#0c2c50" stroke-width="1"/><rect x="89.500" y="4" width="5" height="5" fill="#3a78b8"/><rect x="90.500" y="5.300" width="3" height="2.400" fill="#0c2c50"/><rect x="3.500" y="11.500" width="5" height="1.600" fill="#999" opacity=".7"/><rect x="36" y="13.500" width="14" height="1.600" fill="#999" opacity=".7"/><rect x="89.500" y="11.500" width="5" height="1.600" fill="#999" opacity=".7"/></svg><svg style="left:1183.200px;top:120.500px" width="18" height="18" viewBox="0 0 18 18"><circle cx="9" cy="9" r="6.300" fill="#fff" stroke="#31d0c6" stroke-width="1.800"/></svg><div class="abs" style="left:1201px;top:150px;width:9px;height:583px;background:#f5f5f5"></div><div class="abs" style="left:1201.500px;top:236px;width:8px;height:259px;background:#d8d8d8;border-radius:4px"></div><div class="abs" style="left:150px;top:733px;width:1060px;height:10px;background:#f3f3f3"></div><div class="abs" style="left:495px;top:733.500px;width:278px;height:8px;background:#d2d2d2;border-radius:4px"></div></div>
<div class="rp"><div class="search"><svg style="left:1px;top:7px" width="18" height="18" viewBox="0 0 18 18"><circle cx="7.5" cy="7.5" r="6" fill="none" stroke="#a0a0a0" stroke-width="1.2"/><path d="M12 12 L16.5 16.5" stroke="#a0a0a0" stroke-width="1.2"/></svg><div class="t ph" style="left:25px;top:8px">输入关键字搜索</div><svg style="left:268.5px;top:7.3px" width="18" height="18" viewBox="0 0 18 18"><path d="M9.500 2.300 L7.500 1.300 L1 4.800 V12.600 L7.500 16.300 L14 12.600 V8.500 M1 4.800 L7.500 8.500 L12 6 M7.500 8.500 V16.300" fill="none" stroke="#4a4a4a" stroke-width="1.100" stroke-linejoin="round"/><path d="M13.500 0.500 V7 M10.200 3.700 H16.800" stroke="#4a4a4a" stroke-width="1.100"/></svg><svg style="left:290.3px;top:7px" width="18" height="18" viewBox="0 0 18 18"><path d="M16 9 A7.300 7.300 0 1 1 13.200 3.200" fill="none" stroke="#8c8c8c" stroke-width="1.100"/><path d="M11.300 4.300 H15.300 V0.500" fill="none" stroke="#8c8c8c" stroke-width="1.100"/></svg></div><div class="row" style="top:37.00px"><span class="arr d" style="left:8px;top:12.7px"></span><svg style="left:24px;top:9px" width="17" height="15" viewBox="0 0 17 15"><rect x="0.700" y="0.700" width="5" height="5" rx="0.600" fill="none" stroke="#1fa8d8" stroke-width="1.100"/><rect x="0.700" y="8.800" width="5" height="5" rx="0.600" fill="none" stroke="#1fa8d8" stroke-width="1.100"/><path d="M8.500 5.700 V1.600 Q8.500 0.700 9.400 0.700 H12.600 Q13.500 0.700 13.500 1.600 V3" fill="none" stroke="#1fa8d8" stroke-width="1.100"/></svg><svg style="left:31.3px;top:13.3px" width="9.5" height="9.5" viewBox="0 0 20 20"><path d="M16.93 11.00 L18.93 12.21 L17.88 14.75 L15.60 14.20 L14.20 15.60 L14.75 17.88 L12.21 18.93 L11.00 16.93 L9.00 16.93 L7.79 18.93 L5.25 17.88 L5.80 15.60 L4.40 14.20 L2.12 14.75 L1.07 12.21 L3.07 11.00 L3.07 9.00 L1.07 7.79 L2.12 5.25 L4.40 5.80 L5.80 4.40 L5.25 2.12 L7.79 1.07 L9.00 3.07 L11.00 3.07 L12.21 1.07 L14.75 2.12 L14.20 4.40 L15.60 5.80 L17.88 5.25 L18.93 7.79 L16.93 9.00Z" fill="none" stroke="#2d8cf0" stroke-width="1.9" stroke-linejoin="round"/><circle cx="10" cy="10" r="3" fill="none" stroke="#2d8cf0" stroke-width="1.9"/></svg><span class="tx" style="left:45px">教师服务集</span></div><div class="row" style="top:69.50px"><span class="arr d" style="left:30.5px;top:12.7px"></span><svg style="left:46px;top:6.1px" width="17.5" height="17.5" viewBox="0 0 20 20"><path d="M16.93 11.00 L18.93 12.21 L17.88 14.75 L15.60 14.20 L14.20 15.60 L14.75 17.88 L12.21 18.93 L11.00 16.93 L9.00 16.93 L7.79 18.93 L5.25 17.88 L5.80 15.60 L4.40 14.20 L2.12 14.75 L1.07 12.21 L3.07 11.00 L3.07 9.00 L1.07 7.79 L2.12 5.25 L4.40 5.80 L5.80 4.40 L5.25 2.12 L7.79 1.07 L9.00 3.07 L11.00 3.07 L12.21 1.07 L14.75 2.12 L14.20 4.40 L15.60 5.80 L17.88 5.25 L18.93 7.79 L16.93 9.00Z" fill="none" stroke="#409eff" stroke-width="1.15" stroke-linejoin="round"/><circle cx="10" cy="10" r="3" fill="none" stroke="#409eff" stroke-width="1.15"/></svg><span class="tx" style="left:68px">服务</span></div><div class="row" style="top:102.00px"><span class="arr d" style="left:53px;top:12.7px"></span><svg style="left:68.900px;top:6px" width="17" height="17" viewBox="0 0 17 17"><circle cx="8.500" cy="8.500" r="7.800" fill="none" stroke="#52c06e" stroke-width="1.100"/><path d="M6.600 4.500 C4.800 4.500 5.800 8 4 8.500 C5.800 9 4.800 12.500 6.600 12.500 M10.400 4.500 C12.200 4.500 11.200 8 13 8.500 C11.200 9 12.200 12.500 10.400 12.500" fill="none" stroke="#52c06e" stroke-width="1"/><path d="M7 8.500 H7.800 M8.100 8.500 H8.900 M9.200 8.500 H10" stroke="#52c06e" stroke-width="1"/></svg><span class="tx" style="left:91px">教师信息管理</span></div><div class="row" style="top:134.50px"><span class="arr r" style="left:77px;top:9.7px"></span><span class="dot" style="left:90px;top:12.4px;width:7.400px;height:7.400px;background:#2d8cf0"></span><span class="tx" style="left:105px">修改教师-基础信息</span></div><div class="row" style="top:167.00px"><span class="arr r" style="left:77px;top:9.7px"></span><span class="dot" style="left:90px;top:12.4px;width:7.400px;height:7.400px;background:#2d8cf0"></span><span class="tx" style="left:105px">新增教师</span></div><div class="row" style="top:199.50px"><span class="arr r" style="left:77px;top:9.7px"></span><span class="dot" style="left:90px;top:12.4px;width:7.400px;height:7.400px;background:#2d8cf0"></span><span class="tx" style="left:105px">按主键集合删除(参数放body)</span></div><div class="row" style="top:232.00px"><span class="arr r" style="left:77px;top:9.7px"></span><span class="dot" style="left:90px;top:12.4px;width:7.400px;height:7.400px;background:#2d8cf0"></span><span class="tx" style="left:105px">通过Query Params获取API Key</span></div><div class="row" style="top:264.50px"><span class="arr r" style="left:77px;top:9.7px"></span><span class="dot" style="left:90px;top:12.4px;width:7.400px;height:7.400px;background:#2d8cf0"></span><span class="tx" style="left:105px">获取api请求头认证信息</span></div><div class="row" style="top:297.00px"><span class="arr r" style="left:77px;top:9.7px"></span><span class="dot" style="left:90px;top:12.4px;width:7.400px;height:7.400px;background:#2d8cf0"></span><span class="tx" style="left:105px">获取浏览器请求头信息</span></div><div class="row" style="top:329.50px"><span class="arr r" style="left:77px;top:9.7px"></span><span class="dot" style="left:90px;top:12.4px;width:7.400px;height:7.400px;background:#2d8cf0"></span><span class="tx" style="left:105px">返回教师信息集合</span></div><div class="row" style="top:362.00px"><span class="arr r" style="left:77px;top:9.7px"></span><span class="dot" style="left:90px;top:12.4px;width:7.400px;height:7.400px;background:#2d8cf0"></span><span class="tx" style="left:105px">根据id查询</span></div><div class="row" style="top:394.50px"><span class="arr r" style="left:32px;top:9.7px"></span><svg style="left:46.300px;top:5.700px" width="17" height="18" viewBox="0 0 17 18"><ellipse cx="8.500" cy="3.600" rx="7.500" ry="2.900" fill="none" stroke="#86d066" stroke-width="1.100"/><path d="M1 3.600 V14.300 C1 16 4.500 17.200 8.500 17.200 C12.500 17.200 16 16 16 14.300 V3.600 M1 9 C1 10.700 4.500 11.900 8.500 11.900 C12.500 11.900 16 10.700 16 9" fill="none" stroke="#86d066" stroke-width="1.100"/></svg><span class="tx" style="left:68px">实体</span></div><div class="abs" style="left:1px;top:770.500px;width:312px;height:9.500px;background:#f5f5f5"></div><div class="abs" style="left:1.500px;top:771px;width:196px;height:8px;background:#d2d2d2;border-radius:4px"></div></div>
<div class="mask"></div>
<div class="abs" style="left:0;top:0;width:1920px;height:1px;background:#fff"></div>
<div class="dlg"><div class="t" style="left:24px;top:27px;font-size:20px;line-height:26px;height:26px;color:#1f1f1f;font-weight:350;letter-spacing:0.08px">三方服务调用<span style="letter-spacing:.9px">.bizx</span>属性设置</div><svg style="left:1043px;top:26px" width="16.500" height="16.500" viewBox="0 0 18 18"><path d="M1 6 V1 H6 M12 1 H17 V6 M17 12 V17 H12 M6 17 H1 V12" fill="none" stroke="#409eff" stroke-width="1.700"/></svg><svg style="left:1082.5px;top:28.5px" width="14" height="14" viewBox="0 0 14 14"><path d="M1 1 L13 13 M13 1 L1 13" stroke="#858585" stroke-width="1.300"/></svg><div class="abs" style="left:65px;top:100.5px;width:60px;height:16px;overflow:hidden"><div class="t" style="left:9.500px;top:-7.800px;font-size:18.200px;line-height:24px;height:24px;color:#1890ff">设置</div></div><div class="abs" style="left:200px;top:100.5px;width:60px;height:16px;overflow:hidden"><div class="t" style="left:9.500px;top:-7.800px;font-size:18.200px;line-height:24px;height:24px;color:#606266">描述</div></div><div class="abs" style="left:50px;top:125px;width:1004px;height:3px;background:#e4e7ed"></div><div class="abs" style="left:50px;top:125px;width:85px;height:3px;background:#1890ff"></div><div class="lbl" style="left:77.5px;top:149px"><span style="color:#f56c6c;margin-right:5px">*</span>显示名称</div><div class="inp" style="left:175px;top:145px;width:879px;height:35px;line-height:33px">三方服务调用</div><div class="lbl" style="left:90px;top:207px">访问权限</div><div class="abs" style="left:175px;top:208px;width:50px;height:25px;border-radius:13px;background:#dcdfe6"><div class="abs" style="left:2px;top:2px;width:21px;height:21px;border-radius:50%;background:#fff"></div></div><div class="lbl" style="left:49px;top:265px">变量定义<span style="margin-left:3px">:</span></div><svg style="left:977px;top:265px" width="20" height="20" viewBox="0 0 20 20"><path d="M10 1 V19.500 M0.800 10.500 H19.400" stroke="#409eff" stroke-width="1.350"/></svg><svg style="left:1025px;top:264px" width="20" height="22" viewBox="0 0 20 22"><path d="M0 4.700 H20.400 M7 4.500 V1.500 H13.400 V4.500 M3 4.500 V20.500 H17.400 V4.500 M8 9 V16.500 M12.400 9 V16.500" fill="none" stroke="#409eff" stroke-width="1.5"/></svg><div class="abs" style="left:50px;top:297px;width:1004px;height:95px;border:1px solid #e9e9e9"></div><div class="abs" style="left:51px;top:298px;width:1002px;height:34px;background:#f8f8f8;border-bottom:1px solid #e9e9e9;line-height:36px"><div class="th" style="left:0px;width:48px">#</div><div class="th" style="left:48px;width:300px">名称</div><div class="th" style="left:348px;width:301px">数据类型</div><div class="th" style="left:649px;width:51px">数组</div><div class="th" style="left:700px;width:301px">描述</div></div><div class="t" style="left:517px;top:351px;font-size:17.5px;line-height:24px;height:24px;color:#606266">暂无数据</div><div class="lbl" style="left:49px;top:403px">参数配置表<span style="margin-left:3px">:</span></div><svg style="left:939px;top:402px" width="22" height="22" viewBox="0 0 22 22"><path d="M6.500 3 H4.500 Q1.500 3 1.500 6 V18 Q1.500 21 4.500 21 H16.500 Q19.500 21 19.500 18 V9.500" fill="none" stroke="#409eff" stroke-width="1.500" stroke-linecap="round"/><path d="M10.600 2.700 V17.200 M6.200 12.800 L10.600 17.400 L15 12.800" fill="none" stroke="#409eff" stroke-width="1.500"/><path d="M18.400 1.200 V7.800 M15.100 4.500 H21.700" stroke="#409eff" stroke-width="1.300"/></svg><svg style="left:982px;top:402px" width="22" height="22" viewBox="0 0 22 22"><path d="M6.500 3 H4.500 Q1.500 3 1.500 6 V18 Q1.500 21 4.500 21 H16.500 Q19.500 21 19.500 18 V9.500" fill="none" stroke="#409eff" stroke-width="1.500" stroke-linecap="round"/><path d="M10.600 17.500 V3.400 M6.200 7.800 L10.600 3.200 L15 7.800" fill="none" stroke="#409eff" stroke-width="1.500"/><path d="M18.400 1.200 V7.800 M15.100 4.500 H21.700" stroke="#409eff" stroke-width="1.300"/></svg><svg style="left:1025px;top:402px" width="20" height="22" viewBox="0 0 20 22"><path d="M0 4.700 H20.400 M7 4.500 V1.500 H13.400 V4.500 M3 4.500 V20.500 H17.400 V4.500 M8 9 V16.500 M12.400 9 V16.500" fill="none" stroke="#409eff" stroke-width="1.5"/></svg><div class="abs" style="left:50px;top:435px;width:1004px;height:120px;border:1px solid #e9e9e9"></div><div class="abs" style="left:51px;top:436px;width:1002px;height:31px;background:#f8f8f8;border-bottom:1px solid #e9e9e9;line-height:35px"><div class="th" style="left:0px;width:85px"></div><div class="th" style="left:85px;width:289px">名称</div><div class="th" style="left:374px;width:287px">数据类型</div><div class="th" style="left:661px;width:51px">数组</div><div class="th" style="left:712px;width:289px">描述</div></div><div class="abs" style="left:51px;top:510.0px;width:1002px;height:1px;background:#e9e9e9"></div><div class="lbl" style="left:51.5px;top:480.0px;width:84px;text-align:center">参数</div><div class="inp" style="left:137px;top:472.5px;width:288px;height:35px">id</div><div class="inp" style="left:425px;top:472.5px;width:288px;height:35px">String</div><svg style="left:685px;top:485.5px" width="14" height="8" viewBox="0 0 14 8"><path d="M1 1 L7 7 L13 1" fill="none" stroke="#b4b8bf" stroke-width="1.2"/></svg><div class="abs" style="left:730px;top:483.5px;width:17px;height:17px;border:1px solid #dcdfe6;border-radius:2px;background:#fff"></div><div class="inp" style="left:763px;top:472.5px;width:288px;height:35px"></div><div class="abs" style="left:51px;top:553.5px;width:1002px;height:1px;background:#e9e9e9"></div><div class="lbl" style="left:51.5px;top:522.5px;width:84px;text-align:center">返回值</div><div class="inp" style="left:137px;top:516.0px;width:288px;height:35px">teacher</div><div class="inp" style="left:425px;top:516.0px;width:288px;height:35px">Teacher</div><svg style="left:685px;top:529.0px" width="14" height="8" viewBox="0 0 14 8"><path d="M1 1 L7 7 L13 1" fill="none" stroke="#b4b8bf" stroke-width="1.2"/></svg><div class="abs" style="left:730px;top:527.0px;width:17px;height:17px;border:1px solid #dcdfe6;border-radius:2px;background:#fff"></div><div class="inp" style="left:763px;top:516.0px;width:288px;height:35px"></div><div class="abs" style="left:135px;top:468px;width:1px;height:88px;background:#e9e9e9"></div><div class="abs" style="left:424px;top:468px;width:1px;height:88px;background:#e9e9e9"></div><div class="abs" style="left:711px;top:468px;width:1px;height:88px;background:#e9e9e9"></div><div class="abs" style="left:762px;top:468px;width:1px;height:88px;background:#e9e9e9"></div><div class="abs" style="left:43px;top:465px;width:1017px;height:97px;border:4px solid #ff2616;border-radius:6px"></div><div class="abs" style="left:1079px;top:101px;width:21px;height:453px;background:#f1f1f1"></div><div class="abs" style="left:1081px;top:142px;width:17px;height:392px;background:#c1c1c1"></div><svg style="left:1084.5px;top:109px" width="10" height="6" viewBox="0 0 10 6"><path d="M0 5.500 L5 0.500 L10 5.500Z" fill="#505050"/></svg><svg style="left:1084.5px;top:541px" width="10" height="6" viewBox="0 0 10 6"><path d="M0 0.500 L5 5.500 L10 0.500Z" fill="#a3a3a3"/></svg><div class="abs" style="left:918px;top:567px;width:69px;height:35px;border:1px solid #dcdfe6;border-radius:4px;background:#fff;font-size:15px;line-height:33px;text-align:center;color:#606266">关闭</div><div class="abs" style="left:1005px;top:567px;width:70px;height:35px;border-radius:4px;background:#409eff;font-size:15px;line-height:35px;text-align:center;color:#fff;font-weight:500">确定</div></div>
</div></body></html>
